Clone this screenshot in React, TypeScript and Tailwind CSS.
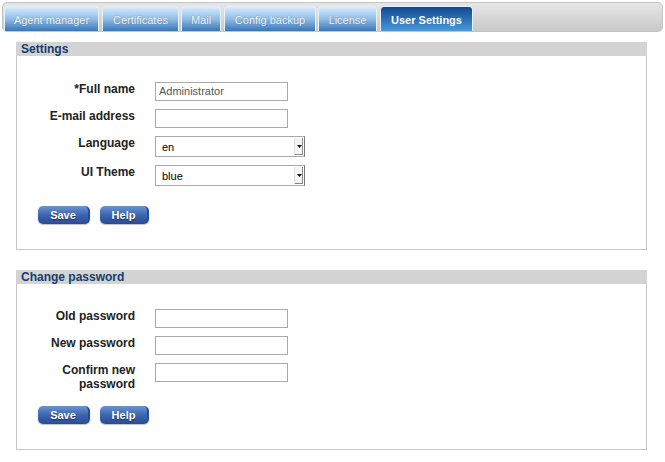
import React from "react";

const TABS = [
  { name: "Agent manager", cls: "w-[95px] ml-[1px]" },
  { name: "Certificates", cls: "w-[77px] ml-[3px]" },
  { name: "Mail", cls: "w-[40px] ml-[2px]" },
  { name: "Config backup", cls: "w-[92px] ml-[3px]" },
  { name: "License", cls: "w-[59px] ml-[2px]" },
];

function Input({ value }: { value?: string }) {
  return (
    <div className="w-[133px] h-[19px] border border-[#a9a9a9] bg-white px-[3px] text-[11px] leading-[17px] text-[#555]">
      {value}
    </div>
  );
}

function Select({ value }: { value: string }) {
  return (
    <div className="w-[150px] h-[21px] flex border border-[#a9a9a9] border-r-[#777] bg-white">
      <div className="flex-1 px-[6px] text-[11px] leading-[21px] text-black">{value}</div>
      <div className="w-[9px] my-[1px] mr-[1px] flex items-center justify-center border-l border-[#ddd] bg-[#f4f4f4] shadow-[inset_-1px_-1px_0_#888]">
        <svg width="5" height="3" viewBox="0 0 5 3">
          <path d="M0 0h5L2.5 3z" fill="#111" />
        </svg>
      </div>
    </div>
  );
}

function Button({ label, w }: { label: string; w: string }) {
  return (
    <button
      className={`${w} h-[18px] rounded-[5px] bg-gradient-to-b from-[#6a95d0] via-[#3d66b0] to-[#2b4a96] border-r-2 border-[#1f4f9a] text-white text-[11px] font-bold leading-[18px] [text-shadow:0_1px_1px_rgba(0,0,0,0.5)] shadow-[0_1px_1px_rgba(0,0,0,0.25)]`}
    >
      {label}
    </button>
  );
}

function Row({ label, children }: { label: React.ReactNode; children: React.ReactNode }) {
  return (
    <div className="flex items-start">
      <div className="w-[118px] text-right text-[12px] font-bold leading-[14px] text-[#222]">
        {label}
      </div>
      <div className="ml-[20px]">{children}</div>
    </div>
  );
}

function Section({ title, children }: { title: string; children: React.ReactNode }) {
  return (
    <div className="w-[631px] ml-[16px]">
      <div className="h-[14px] bg-[#d3d3d3] pl-[5px] text-[12px] font-bold leading-[14px] text-[#123d6e]">
        {title}
      </div>
      <div className="border-x border-b border-[#c8c8c8]">{children}</div>
    </div>
  );
}

export default function App() {
  return (
    <div className="w-[665px] h-[462px] bg-white font-['Liberation_Sans',Arial,sans-serif] pt-[2px]">
      {/* tab bar */}
      <div className="ml-[2px] w-[661px] h-[30px] rounded-[5px] border border-[#c4c4c4] bg-gradient-to-b from-[#e6e6e6] to-[#c9c9c9] flex items-end">
        {TABS.map((t) => (
          <div
            key={t.name}
            className={`${t.cls} h-[25px] rounded-t-[4px] border border-b-0 border-[#e8f0f8] bg-gradient-to-b from-[#d6ecfb] via-[#8fbde6] to-[#3b76b6] text-center text-[11px] leading-[26px] text-[#f2f6fb] [text-shadow:0_0_1px_rgba(30,60,110,0.5)]`}
          >
            {t.name}
          </div>
        ))}
        <div className="w-[93px] ml-[3px] h-[25px] rounded-t-[4px] border border-b-0 border-[#e8f0f8] bg-gradient-to-b from-[#114a8e] via-[#2c6fb4] to-[#4b9bd8] text-center text-[11px] font-bold leading-[26px] text-white">
          User Settings
        </div>
      </div>

      <div className="h-[10px]" />

      <Section title="Settings">
        <div className="pt-[26px] pb-[25px] flex flex-col">
          <div className="flex flex-col gap-[8px]">
            <Row label="*Full name">
              <Input value="Administrator" />
            </Row>
            <Row label="E-mail address">
              <Input />
            </Row>
            <Row label="Language">
              <Select value="en" />
            </Row>
            <Row label="UI Theme">
              <Select value="blue" />
            </Row>
          </div>
          <div className="flex gap-[10px] ml-[21px] mt-[20px]">
            <Button label="Save" w="w-[52px]" />
            <Button label="Help" w="w-[49px]" />
          </div>
        </div>
      </Section>

      <div className="h-[20px]" />

      <Section title="Change password">
        <div className="pt-[25px] pb-[25px] flex flex-col">
          <div className="flex flex-col gap-[8px]">
            <Row label="Old password">
              <Input />
            </Row>
            <Row label="New password">
              <Input />
            </Row>
            <Row label={<>Confirm new<br />password</>}>
              <Input />
            </Row>
          </div>
          <div className="flex gap-[10px] ml-[21px] mt-[15px]">
            <Button label="Save" w="w-[52px]" />
            <Button label="Help" w="w-[49px]" />
          </div>
        </div>
      </Section>
    </div>
  );
}
